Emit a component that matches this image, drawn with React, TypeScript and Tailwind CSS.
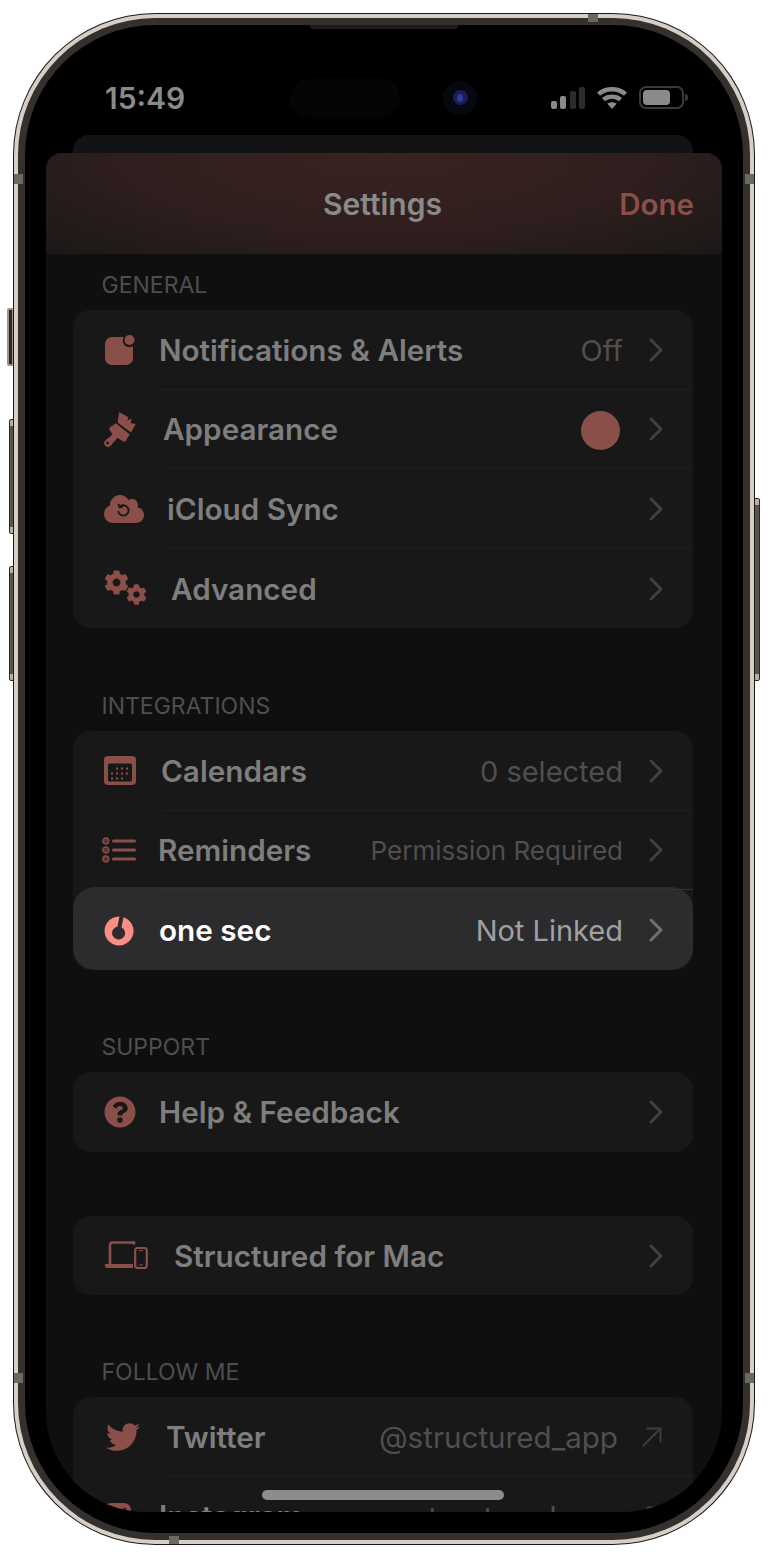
import React from 'react';
import { FaTwitter, FaQuestionCircle, FaCog, FaCloud } from 'react-icons/fa';

const ICON = '#8b4f49';
const CARD = '#181818';

const BellIcon = () => (
  <svg width="32" height="32" viewBox="0 0 32 32">
    <rect x="1" y="3" width="28" height="28" rx="7" fill={ICON} />
    <circle cx="25.5" cy="6.5" r="6.8" fill={CARD} />
    <circle cx="25.5" cy="6" r="5" fill={ICON} />
  </svg>
);

const BrushIcon = () => (
  <svg width="33" height="37" viewBox="14 8 100 110" fill={ICON}>
    <path d="M60 10 L88 26 L85 36 L97 30 L95 44 L110 46 L96 72 L55 42 Z" />
    <path d="M50 44 L92 78 L80 97 Q76 102 70 98 L55 88 L34 112 Q26 120 18 112 Q10 104 18 96 L40 78 L32 66 Q28 60 32 56 Z" />
    <circle cx="25" cy="104" r="4.5" fill={CARD} />
  </svg>
);

const CloudIcon = () => (
  <div className="relative flex items-center justify-center w-[40px] h-[30px]">
    <FaCloud size={40} color={ICON} />
    <svg className="absolute left-[12px] top-[9px]" width="15" height="15" viewBox="0 0 15 15" fill="none" stroke={CARD} strokeWidth="1.8">
      <path d="M4 3.5 A5.2 5.2 0 1 1 2.2 8" />
      <path d="M2.5 1 L3.5 4.4 L7 3.7" />
    </svg>
  </div>
);

const GearsIcon = () => (
  <div className="relative w-[44px] h-[36px]">
    <FaCog size={25} color={ICON} className="absolute left-0 top-0" />
    <FaCog size={21} color={ICON} className="absolute left-[22px] top-[14px]" />
  </div>
);

const calendarDots = [
  [12, 11.5], [17, 11.5], [22, 11.5],
  [7, 16.5], [12, 16.5], [17, 16.5], [22, 16.5],
  [7, 21.5], [12, 21.5], [17, 21.5],
];

const CalendarIcon = () => (
  <svg width="32" height="30" viewBox="0 0 32 30">
    <rect width="32" height="29" rx="4" fill={ICON} />
    <rect x="4" y="7.5" width="24" height="18" rx="1.5" fill={CARD} />
    {calendarDots.map(([x, y]) => (
      <rect key={`${x}-${y}`} x={x} y={y} width="2" height="2" fill={ICON} />
    ))}
  </svg>
);

const ListIcon = () => (
  <svg width="34" height="26" viewBox="0 0 34 26" fill="none">
    {[4, 13, 22].map((y) => (
      <g key={y}>
        <circle cx="3.8" cy={y} r="3" stroke={ICON} strokeWidth="1.3" fill="#5a3532" />
        <rect x="10" y={y - 1.5} width="24" height="3" rx="1.5" fill={ICON} />
      </g>
    ))}
  </svg>
);

const OneSecIcon = () => (
  <svg width="30" height="30" viewBox="0 0 30 30">
    <path d="M15.5 0.5 A14.5 14.5 0 1 0 19.5 1.2 L17.5 11.2 A6.5 6.5 0 1 1 13.5 10.6 Z" fill="#fa8e85" />
  </svg>
);

const DevicesIcon = () => (
  <svg width="44" height="28" viewBox="0 0 44 28" fill="none">
    <path d="M6 19 V4 C6 2.6 7 1.5 8.5 1.5 H30 V3.5" stroke={ICON} strokeWidth="2.6" />
    <path d="M1 23 H29 V27 H3 C1.8 27 1 26 1 25 Z" fill={ICON} />
    <path d="M6 19 V23" stroke={ICON} strokeWidth="2.6" />
    <rect x="31.2" y="7" width="11.6" height="20" rx="2.4" stroke={ICON} strokeWidth="2.2" />
    <rect x="35" y="9" width="4" height="1" fill={ICON} />
    <rect x="35" y="23.5" width="4" height="1" fill={ICON} />
  </svg>
);

const InstagramIcon = () => (
  <svg width="27" height="27" viewBox="0 0 27 27">
    <rect width="27" height="27" rx="7" fill={ICON} />
    <circle cx="20.5" cy="6.5" r="1.8" fill={CARD} />
  </svg>
);

const Chevron = ({ color }: { color: string }) => (
  <svg width="30" height="26" viewBox="0 0 30 26" fill="none" className="ml-[18px] mr-[-3px] mb-[2px] shrink-0">
    <path d="M10 3 L20 13 L10 23" stroke={color} strokeWidth="3" strokeLinecap="round" strokeLinejoin="round" />
  </svg>
);

const ExternalArrow = () => (
  <svg width="20" height="20" viewBox="0 0 20 20" fill="none" stroke="#3f3f3f" strokeWidth="1.8" className="ml-[24px] mr-[6px] mb-[2px] shrink-0">
    <path d="M1 19 L18.5 1.5" />
    <path d="M4.5 1.5 H18.5 V15.5" />
  </svg>
);

type Row = {
  label: string;
  value?: string;
  valueClass?: string;
  icon: React.ReactNode;
  col: string;
  dot?: boolean;
  external?: boolean;
};

const general: Row[] = [
  { label: 'Notifications & Alerts', value: 'Off', icon: <BellIcon />, col: 'w-[86px]' },
  { label: 'Appearance', dot: true, icon: <BrushIcon />, col: 'w-[90px]' },
  { label: 'iCloud Sync', icon: <CloudIcon />, col: 'w-[94px]' },
  { label: 'Advanced', icon: <GearsIcon />, col: 'w-[98px]' },
];

const integrations: Row[] = [
  { label: 'Calendars', value: '0 selected', icon: <CalendarIcon />, col: 'w-[88px]' },
  {
    label: 'Reminders',
    value: 'Permission Required',
    valueClass: 'text-[26px]',
    icon: <div className="-ml-[2px]"><ListIcon /></div>,
    col: 'w-[85px]',
  },
];

const follow: Row[] = [
  {
    label: 'Twitter',
    value: '@structured_app',
    valueClass: 'text-[29.6px]',
    external: true,
    icon: <FaTwitter size={34} color={ICON} className="ml-[2px]" />,
    col: 'w-[93px]',
  },
  { label: 'Instagram', value: 'structured.app', valueClass: 'text-[29.6px]', external: true, icon: <InstagramIcon />, col: 'w-[86px]' },
];

const SettingsRow = ({ row, last }: { row: Row; last?: boolean }) => (
  <div className="flex h-[79.5px]">
    <div className={`${row.col} shrink-0 pl-[31px] flex items-center`}>{row.icon}</div>
    <div className={`flex-1 flex items-center pr-[25px] pt-[3px] ${last ? '' : 'border-b border-[#202020]'}`}>
      <span className="flex-1 mb-[1px] text-[29.7px] font-semibold text-[#7e7e7e]">{row.label}</span>
      {row.value && <span className={`${row.valueClass ?? 'text-[29px]'} mb-[1px] text-[#4f4f4f]`}>{row.value}</span>}
      {row.dot && <div className="w-[39px] h-[39px] mr-[3px] rounded-full bg-[#8b4f49]" />}
      {row.external ? <ExternalArrow /> : <Chevron color="#404040" />}
    </div>
  </div>
);

const SectionLabel = ({ text, className }: { text: string; className?: string }) => (
  <div className={`flex items-end pl-[55.5px] pb-[11px] text-[23px] leading-[28px] text-[#4e4e4e] ${className ?? 'h-[56px]'}`}>
    {text}
  </div>
);

const Card = ({ children }: { children: React.ReactNode }) => (
  <div className="ml-[27px] mr-[29px] rounded-[18px] bg-[#181818]">{children}</div>
);

const StatusIcons = () => (
  <div className="flex items-center gap-[12px]">
    <div className="flex items-end gap-[3.5px] h-[22px]">
      <div className="w-[6px] h-[8px] rounded-[2px] bg-[#8a8a8a]" />
      <div className="w-[6px] h-[13px] rounded-[2px] bg-[#8a8a8a]" />
      <div className="w-[6px] h-[18px] rounded-[2px] bg-[#2c2c2c]" />
      <div className="w-[6px] h-[22px] rounded-[2px] bg-[#2c2c2c]" />
    </div>
    <svg width="30" height="22" viewBox="0 0 30 22" fill="#8a8a8a">
      <path d="M15 22 L10.3 16.8 C12.8 14.8 17.2 14.8 19.7 16.8 Z" />
      <path d="M8 14.3 L5 11 C10 6.4 20 6.4 25 11 L22 14.3 C18 10.9 12 10.9 8 14.3 Z" />
      <path d="M3 8.8 L0 5.5 C8 -1.7 22 -1.7 30 5.5 L27 8.8 C20.5 3 9.5 3 3 8.8 Z" />
    </svg>
    <div className="flex items-center gap-[1px]">
      <div className="w-[45px] h-[23px] rounded-[7px] border-2 border-[#3a3a3a] p-[2px]">
        <div className="w-[27px] h-full rounded-[4px] bg-[#8a8a8a]" />
      </div>
      <div className="w-[3px] h-[7px] rounded-r-full bg-[#3a3a3a]" />
    </div>
  </div>
);

export default function App() {
  return (
    <div className="relative w-[768px] h-[1558px] bg-white pt-[13px] pl-[13px] font-['Inter',sans-serif]">
      {/* side buttons */}
      <div className="absolute left-[7px] top-[308px] w-[7px] h-[58px] rounded-l-[2px] border-2 border-[#9a948b] bg-[#2b2927]" />
      <div className="absolute left-[9px] top-[419px] w-[5px] h-[115px] rounded-l-[2px] border border-[#2a2826] bg-[linear-gradient(#b5afa6_0,#b5afa6_6px,#57534e_6px,#57534e_calc(100%-6px),#b5afa6_calc(100%-6px))]" />
      <div className="absolute left-[9px] top-[566px] w-[5px] h-[115px] rounded-l-[2px] border border-[#2a2826] bg-[linear-gradient(#b5afa6_0,#b5afa6_6px,#57534e_6px,#57534e_calc(100%-6px),#b5afa6_calc(100%-6px))]" />
      <div className="absolute left-[754px] top-[498px] w-[6px] h-[183px] rounded-r-[2px] border border-[#2a2826] bg-[linear-gradient(#b5afa6_0,#b5afa6_6px,#57534e_6px,#57534e_calc(100%-6px),#b5afa6_calc(100%-6px))]" />

      {/* device frame */}
      <div className="relative w-[742px] h-[1532px] rounded-[142px] bg-[#1a1918] p-px">
        <div className="h-full rounded-[141px] bg-[#d6cfc6] p-[4px]">
          <div className="h-full rounded-[137px] bg-[#33302d] p-[7px]">
            <div className="relative h-full rounded-[130px] bg-black overflow-hidden">
              {/* speaker */}
              <div className="absolute left-[285px] top-0 w-[148px] h-[4px] rounded-b-[4px] bg-[#1e1d1c]" />

              {/* status bar */}
              <div className="flex items-center h-[110px] pl-[80px] pr-[55px] pt-[35px]">
                <span className="w-[185px] pt-[2px] text-[30px] font-semibold text-[#8a8a8a]">15:49</span>
                <div className="w-[110px] h-[38px] rounded-full bg-[#050505]" />
                <div className="ml-[43px] w-[34px] h-[34px] rounded-full bg-[#07070f] flex items-center justify-center">
                  <div className="w-[15px] h-[15px] rounded-full bg-[#1c1c5c] flex items-center justify-center">
                    <div className="w-[6px] h-[8px] rounded-full bg-[#2f3f8f]" />
                  </div>
                </div>
                <div className="flex-1 flex justify-end">
                  <StatusIcons />
                </div>
              </div>

              <div className="ml-[48px] mr-[50px] h-[18px] rounded-t-[16px] bg-[#121314]" />

              {/* settings sheet */}
              <div className="mx-[21px] h-[1359px] rounded-t-[16px] rounded-b-[100px] bg-[#0f0f0f] overflow-hidden">
                <div className="relative flex items-center justify-center h-[101px] pt-[2px] pr-[3px] bg-[radial-gradient(ellipse_at_50%_0%,#3a2220_0%,#2f1f1e_55%,#1b1817_100%)]">
                  <span className="text-[30px] font-semibold text-[#8a8a8a]">Settings</span>
                  <span className="absolute right-[28px] text-[29.5px] font-semibold text-[#8b4f49]">Done</span>
                </div>

                <SectionLabel text="GENERAL" />
                <Card>
                  {general.map((r, i) => (
                    <SettingsRow key={r.label} row={r} last={i === general.length - 1} />
                  ))}
                </Card>

                <SectionLabel text="INTEGRATIONS" className="h-[103px]" />
                <Card>
                  {integrations.map((r) => (
                    <SettingsRow key={r.label} row={r} />
                  ))}
                  {/* pressed row */}
                  <div className="relative -mt-[3px] h-[83px] rounded-[22px] bg-[#2c2c2e] flex flex-col">
                    <div className="ml-[85px] mt-[2px] h-px bg-[#343436]" />
                    <div className="flex-1 flex items-center pl-[31px] pr-[25px] pt-[1px]">
                      <div className="w-[55px] shrink-0">
                        <OneSecIcon />
                      </div>
                      <span className="flex-1 text-[29.7px] font-semibold text-white">one sec</span>
                      <span className="text-[29px] text-[#a0a0a0]">Not Linked</span>
                      <Chevron color="#707070" />
                    </div>
                  </div>
                </Card>

                <SectionLabel text="SUPPORT" className="h-[102px]" />
                <Card>
                  <SettingsRow last row={{ label: 'Help & Feedback', icon: <FaQuestionCircle size={32} color={ICON} />, col: 'w-[86px]' }} />
                </Card>

                <div className="h-[64px]" />
                <Card>
                  <SettingsRow last row={{ label: 'Structured for Mac', icon: <DevicesIcon />, col: 'w-[101px]' }} />
                </Card>

                <SectionLabel text="FOLLOW ME" className="h-[102px]" />
                <Card>
                  {follow.map((r) => (
                    <SettingsRow key={r.label} row={r} />
                  ))}
                </Card>
              </div>

              {/* home indicator */}
              <div className="absolute left-[237px] top-[1465px] w-[242px] h-[10px] rounded-full bg-[#8c8c8c]" />
            </div>
          </div>
        </div>

        {/* antenna bands */}
        <div className="absolute left-px top-[161px] w-[9px] h-[10px] bg-[#6a6864]" />
        <div className="absolute right-px top-[161px] w-[9px] h-[10px] bg-[#6a6864]" />
        <div className="absolute left-px top-[1360px] w-[9px] h-[10px] bg-[#6a6864]" />
        <div className="absolute right-px top-[1360px] w-[9px] h-[10px] bg-[#6a6864]" />
        <div className="absolute left-[575px] top-px w-[10px] h-[8px] bg-[#6a6864]" />
        <div className="absolute left-[156px] bottom-px w-[10px] h-[8px] bg-[#6a6864]" />
      </div>
    </div>
  );
}
